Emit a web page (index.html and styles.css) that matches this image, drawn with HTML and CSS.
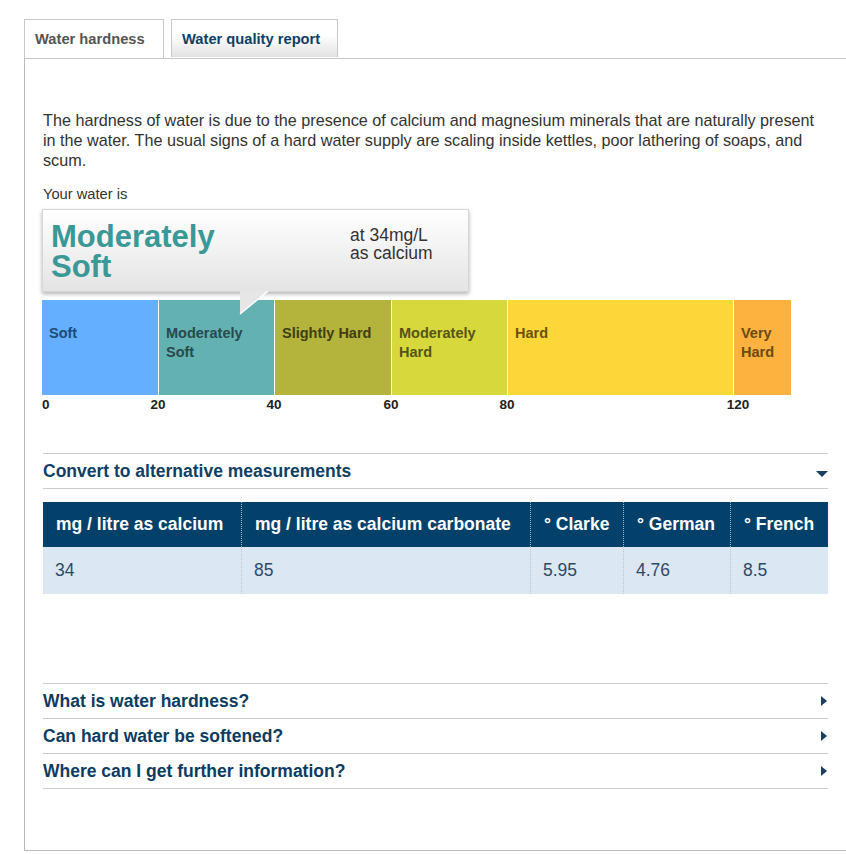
FILE: index.html
```html
<!DOCTYPE html>
<html lang="en">
<head>
  <meta charset="UTF-8" />
  <title>Water hardness</title>
  <link rel="stylesheet" href="styles.css">
</head>
<body>
  <div class="page">
    <ul class="tabs">
      <li class="tab active">Water hardness</li>
      <li class="tab">Water quality report</li>
    </ul>

    <div class="panel">
      <p class="intro">The hardness of water is due to the presence of calcium and magnesium minerals that are naturally present in the water. The usual signs of a hard water supply are scaling inside kettles, poor lathering of soaps, and scum.</p>
      <div class="your-water">Your water is</div>

      <div class="result">
        <div class="result-title">Moderately<br>Soft</div>
        <div class="result-note">at 34mg/L<br>as calcium</div>
        <svg class="pointer" width="32" height="26" viewBox="0 0 32 26">
          <polygon points="1,0 29,0 1,23" fill="#e6e6e6" />
          <line x1="29" y1="0" x2="1" y2="23" stroke="#ffffff" stroke-width="1.5" />
        </svg>
      </div>

      <div class="bar">
        <div class="seg soft">Soft</div>
        <div class="seg mod-soft">Moderately<br>Soft</div>
        <div class="seg slight">Slightly Hard</div>
        <div class="seg mod-hard">Moderately<br>Hard</div>
        <div class="seg hard">Hard</div>
        <div class="seg very-hard">Very<br>Hard</div>
      </div>
      <div class="scale">
        <span class="tick first" style="left: 0px">0</span>
        <span class="tick" style="left: 116px">20</span>
        <span class="tick" style="left: 232px">40</span>
        <span class="tick" style="left: 349px">60</span>
        <span class="tick" style="left: 465px">80</span>
        <span class="tick" style="left: 696px">120</span>
      </div>

      <div class="convert">
        <span>Convert to alternative measurements</span>
        <span class="arrow-down"></span>
      </div>

      <table class="measures">
        <thead>
          <tr>
            <th class="c1">mg / litre as calcium</th>
            <th class="c2">mg / litre as calcium carbonate</th>
            <th class="c3">° Clarke</th>
            <th class="c4">° German</th>
            <th class="c5">° French</th>
          </tr>
        </thead>
        <tbody>
          <tr>
            <td>34</td>
            <td>85</td>
            <td>5.95</td>
            <td>4.76</td>
            <td>8.5</td>
          </tr>
        </tbody>
      </table>

      <ul class="faq">
        <li><span>What is water hardness?</span><span class="arrow-right"></span></li>
        <li><span>Can hard water be softened?</span><span class="arrow-right"></span></li>
        <li><span>Where can I get further information?</span><span class="arrow-right"></span></li>
      </ul>
    </div>
  </div>
</body>
</html>
```

FILE: styles.css
```css
body {
  margin: 0;
  font-family: 'Liberation Sans', Arial, sans-serif;
  background-color: #fff;
  color: #333;
  overflow-x: hidden;
}

.page {
  padding: 19px 0 0 24px;
}

.tabs {
  display: flex;
  gap: 7px;
  list-style: none;
  margin: 0;
  padding: 0;
  position: relative;
  z-index: 2;
}

.tab {
  box-sizing: border-box;
  height: 38px;
  padding: 0 10px 0 10px;
  line-height: 38px;
  font-size: 14.7px;
  font-weight: bold;
  color: #0e3f66;
  border: 1px solid #c8c8c8;
  border-bottom: none;
  background: linear-gradient(#ffffff 40%, #e2e2e2);
  width: 167px;
}

.tab.active {
  width: 140px;
  height: 39px;
  color: #555;
  background: #fff;
}

.panel {
  box-sizing: border-box;
  width: 850px;
  margin-top: 0;
  border: 1px solid #bbb;
  border-top-color: #c8c8c8;
  padding: 51px 0 61px 18px;
  position: relative;
  z-index: 1;
}

.intro {
  width: 785px;
  margin: 0;
  font-size: 16.2px;
  line-height: 20px;
}

.your-water {
  margin-top: 16px;
  font-size: 14.7px;
  line-height: 16px;
}

.result {
  position: relative;
  box-sizing: border-box;
  width: 427px;
  height: 83px;
  margin: 7px 0 0 -1px;
  border: 1px solid #d6d6d6;
  background: linear-gradient(#ffffff, #e4e4e4);
  box-shadow: 0 2px 4px rgba(0, 0, 0, 0.3);
  display: flex;
  z-index: 3;
}

.result-title {
  width: 299px;
  padding: 12px 0 0 8px;
  font-size: 31px;
  font-weight: bold;
  line-height: 30px;
  color: #3a9896;
}

.result-note {
  padding-top: 16px;
  font-size: 17.5px;
  line-height: 18px;
  color: #333;
}

.pointer {
  position: absolute;
  left: 196px;
  top: 81px;
}

.bar {
  display: flex;
  height: 95px;
  margin: 8px 0 0 -1px;
}

.seg {
  box-sizing: border-box;
  padding: 24px 0 0 7px;
  font-size: 14.5px;
  font-weight: bold;
  line-height: 19px;
  border-left: 1px solid #fff;
}

.soft { width: 116px; background: #64afff; color: #1b4c78; border-left: none; }
.mod-soft { width: 116px; background: #63b2b1; color: #274a4c; }
.slight { width: 117px; background: #b4b43c; color: #3e3e12; }
.mod-hard { width: 116px; background: #d7d83b; color: #555518; }
.hard { width: 226px; background: #fdd637; color: #6a5214; }
.very-hard { width: 58px; background: #fdb13f; color: #6e4a12; }

.scale {
  position: relative;
  height: 18px;
  margin-left: -1px;
  margin-top: 2px;
}

.tick {
  position: absolute;
  top: 0;
  transform: translateX(-50%);
  font-size: 13.5px;
  font-weight: bold;
  color: #222;
}

.tick.first {
  transform: none;
}

.convert {
  width: 785px;
  height: 34px;
  margin-top: 38px;
  border-top: 1px solid #ccc;
  border-bottom: 1px solid #ccc;
  display: flex;
  justify-content: space-between;
  align-items: center;
  font-size: 17.5px;
  font-weight: bold;
  color: #0f3f66;
}

.arrow-down {
  width: 0;
  height: 0;
  margin: 6px 0 0 0;
  border-left: 6px solid transparent;
  border-right: 6px solid transparent;
  border-top: 6px solid #1a3f5f;
}

.measures {
  width: 785px;
  margin-top: 13px;
  border-collapse: collapse;
  font-size: 17.5px;
}

.measures th {
  height: 45px;
  padding: 0 0 0 13px;
  text-align: left;
  background: #03416b;
  color: #fff;
  font-weight: bold;
  border-left: 1px dotted #9fb4c6;
}

.measures td {
  height: 47px;
  padding: 0 0 0 12px;
  background: #dbe7f2;
  color: #2c4a68;
  border-left: 1px dotted #b9c6d2;
}

.measures th:first-child,
.measures td:first-child {
  border-left: none;
}

.c1 { width: 185px; }
.c2 { width: 275px; }
.c3 { width: 79px; }
.c4 { width: 93px; }

.faq {
  list-style: none;
  width: 785px;
  margin: 89px 0 0 0;
  padding: 0;
  border-top: 1px solid #ccc;
}

.faq li {
  height: 34px;
  border-bottom: 1px solid #ccc;
  display: flex;
  justify-content: space-between;
  align-items: center;
  font-size: 17.5px;
  font-weight: bold;
  color: #0c3c62;
}

.arrow-right {
  width: 0;
  height: 0;
  margin-right: 1px;
  border-top: 5px solid transparent;
  border-bottom: 5px solid transparent;
  border-left: 6px solid #1a3f5f;
}
```
